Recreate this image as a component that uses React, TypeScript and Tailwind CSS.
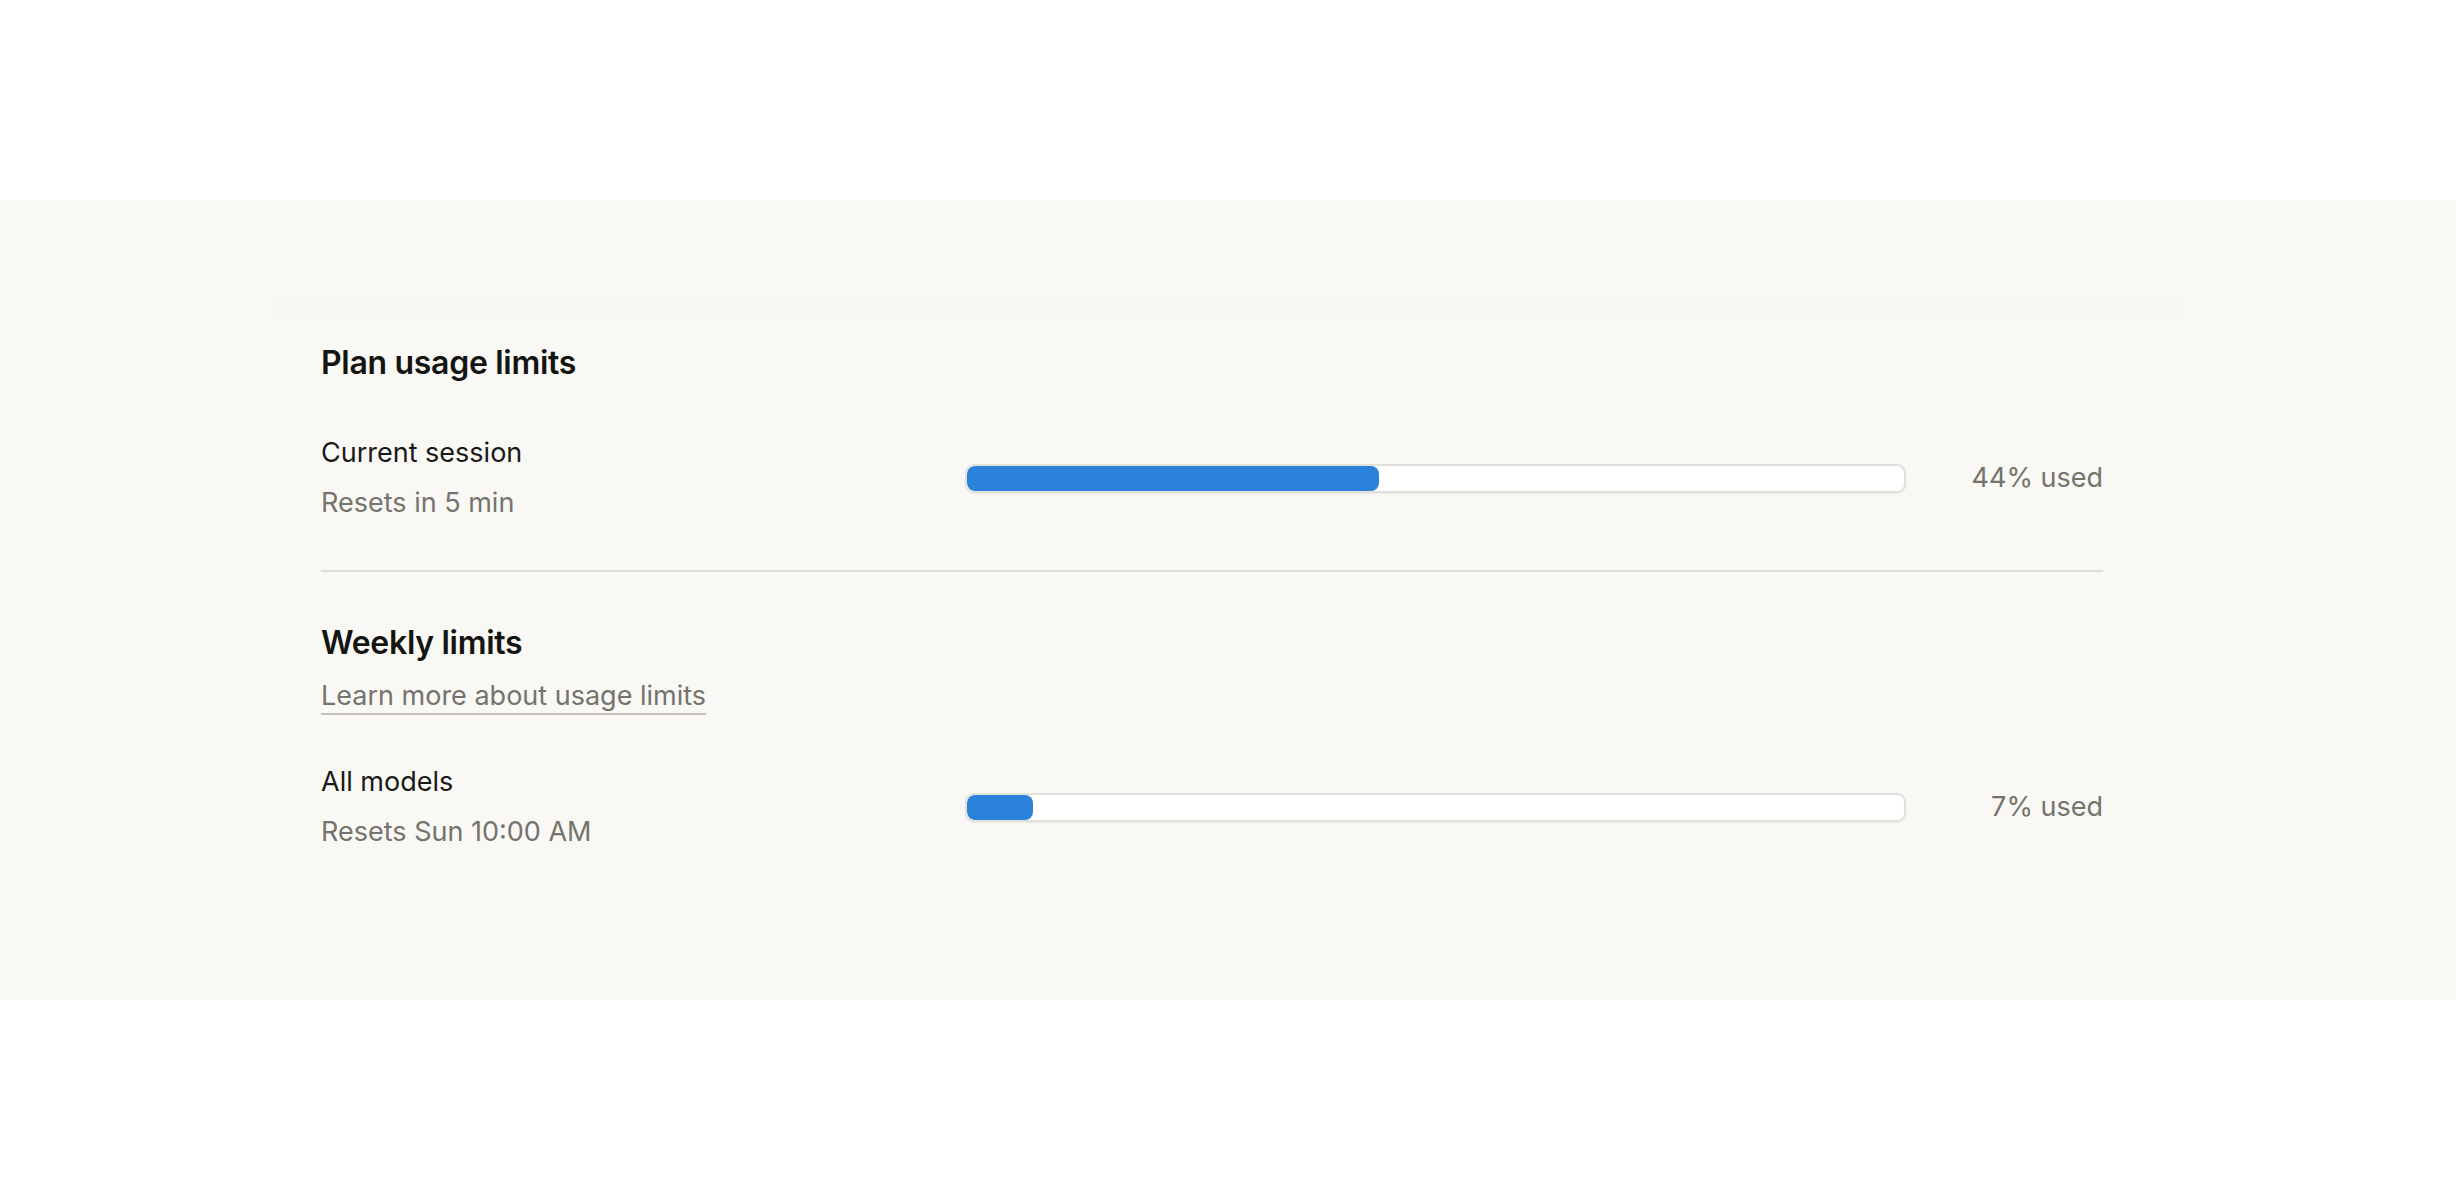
import React from 'react'

interface LimitRowProps {
  label: string
  resetText: string
  percent: number
}

function LimitRow({ label, resetText, percent }: LimitRowProps) {
  return (
    <div className="flex items-center">
      <div className="w-[644px] shrink-0">
        <div className="text-[27px] leading-[36px] text-[#1a1918]">{label}</div>
        <div className="mt-[14px] text-[27px] leading-[36px] text-[#75736d]">{resetText}</div>
      </div>
      {/* progress track */}
      <div className="flex-1 h-[29px] rounded-[9px] bg-white border-2 border-[#e2e0db] shadow-[0_1px_2px_rgba(0,0,0,0.06)] overflow-hidden">
        <div
          className="h-full rounded-[8px] bg-[#2b82db]"
          style={{ width: `${percent}%` }}
        />
      </div>
      <div className="w-[197px] shrink-0 text-right text-[27px] leading-[36px] text-[#75736d]">
        {percent}% used
      </div>
    </div>
  )
}

export default function App() {
  return (
    <div
      className="min-h-screen bg-white"
      style={{ fontFamily: 'Inter, "Noto Sans", sans-serif' }}
    >
      <div className="h-[200px]" />
      <section className="bg-[#f9f8f4] pt-[98px] pb-[150px]">
        <div className="mx-auto w-[1904px]">
          {/* faint card header strip */}
          <div className="h-[19px] bg-[#f8f7f3]" />
          <div className="pl-[45px] pr-[77px] pt-[25px]">
            <h2 className="text-[32px] leading-[42px] font-semibold text-[#141413] tracking-[-0.3px]">
              Plan usage limits
            </h2>
            <div className="mt-[51px]">
              <LimitRow label="Current session" resetText="Resets in 5 min" percent={44} />
            </div>
            <div className="mt-[49px] h-[2px] bg-[#e0ded8]" />
            <h2 className="mt-[50px] text-[32px] leading-[42px] font-semibold text-[#141413] tracking-[-0.3px]">
              Weekly limits
            </h2>
            <a
              href="#"
              className="mt-[14px] inline-block text-[27px] leading-[36px] text-[#75736d] underline decoration-[#c4c2bb] decoration-2 underline-offset-[8px]"
            >
              Learn more about usage limits
            </a>
            <div className="mt-[50px]">
              <LimitRow label="All models" resetText="Resets Sun 10:00 AM" percent={7} />
            </div>
          </div>
        </div>
      </section>
      <div className="h-[200px]" />
    </div>
  )
}
